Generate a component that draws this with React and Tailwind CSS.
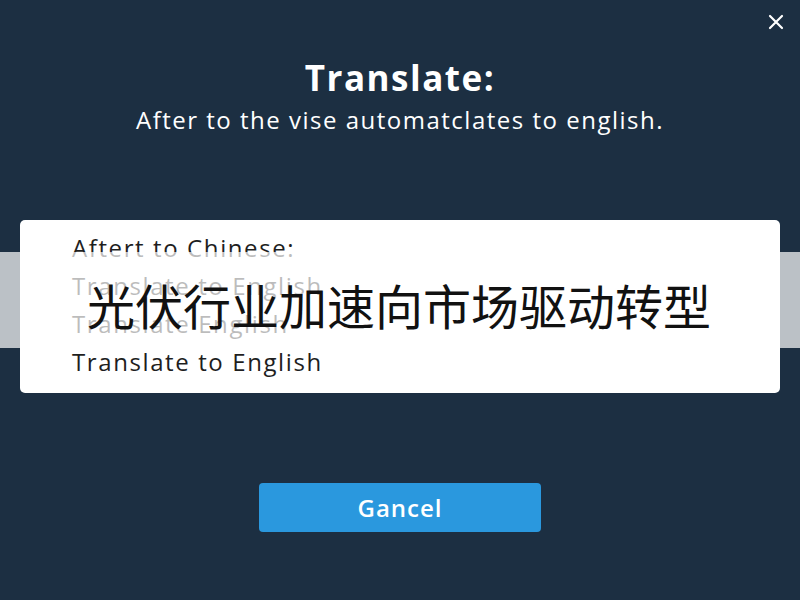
import React from "react";

const items = [
  "Aftert to Chinese:",
  "Translate to English",
  "Translate English",
  "Translate to English",
];

export default function App() {
  return (
    <div
      className="relative w-[800px] h-[600px] overflow-hidden bg-[#1c2f42] flex flex-col items-center"
      style={{ fontFamily: '"Open Sans", "Noto Sans", sans-serif' }}
    >
      {/* close button */}
      <button className="absolute top-[13px] right-[15px] w-[18px] h-[18px] flex items-center justify-center text-white">
        <svg width="16" height="16" viewBox="0 0 16 16" fill="none">
          <path d="M2 2L14 14M14 2L2 14" stroke="#ffffff" strokeWidth="2.2" strokeLinecap="round" />
        </svg>
      </button>

      <h1 className="mt-[58px] text-[35px] leading-[40px] font-bold tracking-[1.5px] text-white">
        Translate:
      </h1>
      <p className="mt-[7px] text-[24px] leading-[30px] tracking-[1.5px] text-white">
        After to the vise automatclates to english.
      </p>

      <div className="mt-[85px] w-[760px] h-[173px] bg-white rounded-[5px] px-[52px] pt-[9px] flex flex-col">
        {items.map((t, i) => (
          <div key={i} className="text-[24px] leading-[38px] tracking-[1.6px] text-[#1e1e1e]">
            {t}
          </div>
        ))}
      </div>

      <button className="mt-[90px] w-[282px] h-[49px] rounded-[4px] bg-[#2a98de] text-white text-[24px] font-semibold tracking-[1px]">
        Gancel
      </button>

      {/* caption band */}
      <div className="absolute left-0 right-0 top-[252px] h-[96px] bg-white/70 flex items-center pl-[87px] pt-[8px]">
        <span
          className="text-[48px] leading-none text-[#111111]"
          style={{ fontFamily: '"Noto Sans CJK SC", "Noto Sans", sans-serif' }}
        >
          光伏行业加速向市场驱动转型
        </span>
      </div>
    </div>
  );
}
